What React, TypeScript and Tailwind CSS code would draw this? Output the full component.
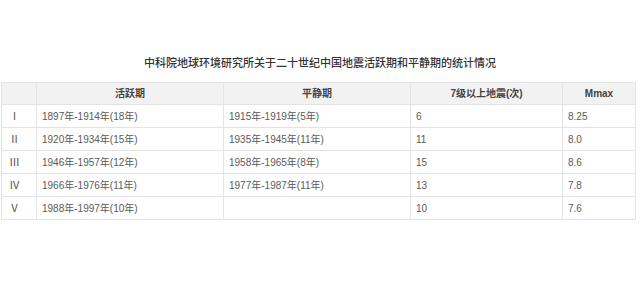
const rows = [
  ['Ⅰ', '1897年-1914年(18年)', '1915年-1919年(5年)', '6', '8.25'],
  ['Ⅱ', '1920年-1934年(15年)', '1935年-1945年(11年)', '11', '8.0'],
  ['Ⅲ', '1946年-1957年(12年)', '1958年-1965年(8年)', '15', '8.6'],
  ['Ⅳ', '1966年-1976年(11年)', '1977年-1987年(11年)', '13', '7.8'],
  ['Ⅴ', '1988年-1997年(10年)', '', '10', '7.6'],
]

export default function App() {
  return (
    <div
      className="w-[640px] h-[308px] bg-white"
      style={{ fontFamily: '"Liberation Sans", "Noto Sans CJK SC", sans-serif' }}
    >
      {/* Title */}
      <div className="pt-[56px] h-[82px] text-center text-[11px] leading-[14px] text-[#333] font-medium">
        中科院地球环境研究所关于二十世纪中国地震活跃期和平静期的统计情况
      </div>

      <table className="ml-[1px] w-[634px] border-collapse table-fixed text-[10px] text-[#5a5a5a]">
        <colgroup>
          <col className="w-[35px]" />
          <col className="w-[187px]" />
          <col className="w-[187px]" />
          <col className="w-[152px]" />
          <col className="w-[73px]" />
        </colgroup>
        <thead>
          <tr className="h-[22px] bg-[#f2f2f2] text-[#444]">
            <th className="border border-[#e3e3e3]"></th>
            <th className="border border-[#e3e3e3] font-semibold">活跃期</th>
            <th className="border border-[#e3e3e3] font-semibold">平静期</th>
            <th className="border border-[#e3e3e3] font-semibold">7级以上地震(次)</th>
            <th className="border border-[#e3e3e3] font-semibold">Mmax</th>
          </tr>
        </thead>
        <tbody>
          {rows.map((r) => (
            <tr key={r[0]} className="h-[23px]">
              {r.map((c, i) => (
                <td
                  key={i}
                  className={`border border-[#e3e3e3] whitespace-nowrap ${
                    i === 0 ? 'pl-[7px] font-["Liberation_Serif","Noto_Sans_CJK_SC",serif] text-[11px]' : 'pl-[5px]'
                  }`}
                >
                  {c}
                </td>
              ))}
            </tr>
          ))}
        </tbody>
      </table>
    </div>
  )
}
